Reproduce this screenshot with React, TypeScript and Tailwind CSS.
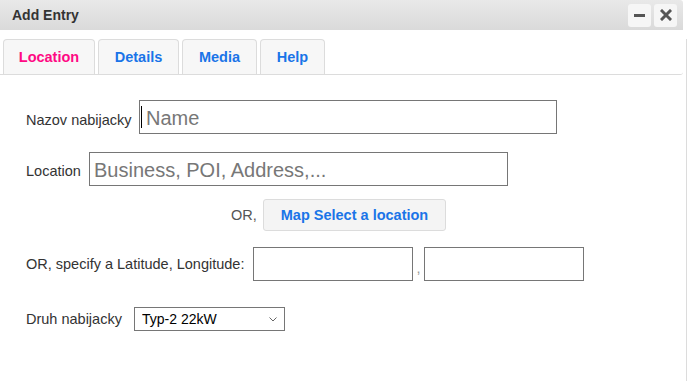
import React from "react";

const font = { fontFamily: '"Liberation Sans", Arial, sans-serif' };

function Tab({ label, active, width }: { label: string; active?: boolean; width: string }) {
  return (
    <div
      className={`${width} h-[35px] flex items-center justify-center pt-[2px] rounded-t-[4px] border border-b-0 border-[#dcdcdc] bg-[#f7f7f7] text-[14.5px] font-bold ${
        active ? "text-[#ff0a84]" : "text-[#1a74e8]"
      }`}
    >
      {label}
    </div>
  );
}

export default function App() {
  return (
    <div className="w-[687px] h-[381px] bg-white overflow-hidden" style={font}>
      {/* title bar */}
      <div className="w-[683px] h-[30px] flex items-center justify-between pl-3 pr-[6px] rounded-tr-[3px] bg-gradient-to-b from-[#e9e9e9] to-[#dadada]">
        <span className="text-[14px] font-bold text-[#333]">Add Entry</span>
        <div className="flex gap-[3px]">
          <button className="w-[23px] h-[23px] rounded-[3px] bg-[#f6f6f6] flex items-center justify-center">
            <span className="block w-[11px] h-[3px] bg-[#555]" />
          </button>
          <button className="w-[23px] h-[23px] rounded-[3px] bg-[#f6f6f6] flex items-center justify-center">
            <svg width="12" height="12" viewBox="0 0 12 12">
              <path d="M2 2 L10 10 M10 2 L2 10" stroke="#555" strokeWidth="3" strokeLinecap="square" />
            </svg>
          </button>
        </div>
      </div>

      <div className="w-[687px] h-[351px] border-r border-[#dcdcdc]">
        {/* tabs */}
        <div className="w-[683px] mt-[9px] pl-[3px] flex gap-[3px] border-b border-[#dcdcdc] rounded-br-[3px]">
          <Tab label="Location" active width="w-[92px]" />
          <Tab label="Details" width="w-[81px]" />
          <Tab label="Media" width="w-[75px]" />
          <Tab label="Help" width="w-[65px]" />
        </div>

        {/* form */}
        <div className="pl-[26px] pt-[25px] text-[14.5px] text-[#333]">
          <div className="flex items-center h-[34px]">
            <span className="w-[113px] pt-[7px]">Nazov nabijacky</span>
            <div className="relative">
              <input
                className="w-[418px] h-[34px] border border-[#767676] pl-[6px] pt-[2px] text-[20px] text-[#333] placeholder:text-[#777] outline-none"
                placeholder="Name"
              />
              <span className="absolute left-[2px] top-[6px] w-px h-[22px] bg-black" />
            </div>
          </div>

          <div className="flex items-center h-[34px] mt-[18px]">
            <span className="w-[63px] pt-[5px]">Location</span>
            <input
              className="w-[419px] h-[34px] border border-[#767676] pl-[4px] pt-[2px] text-[20px] text-[#333] placeholder:text-[#777] outline-none"
              placeholder="Business, POI, Address,..."
            />
          </div>

          <div className="flex items-center h-[32px] mt-[13px] pl-[205px]">
            <span className="w-[32px] pt-[2px] text-[#555]">OR,</span>
            <button className="w-[183px] h-[32px] pt-[1px] rounded-[3px] border border-[#dcdcdc] bg-[#f4f4f4] text-[14.5px] font-bold text-[#1a74e8]">
              Map Select a location
            </button>
          </div>

          <div className="flex items-center h-[34px] mt-[16px]">
            <span className="w-[227px] pt-[2px]">OR, specify a Latitude, Longitude:</span>
            <input className="w-[160px] h-[34px] border border-[#767676] outline-none" />
            <span className="w-[11px] text-center text-[#999] pt-[10px]">,</span>
            <input className="w-[160px] h-[34px] border border-[#767676] outline-none" />
          </div>

          <div className="flex items-center h-[24px] mt-[26px]">
            <span className="w-[108px] pt-[2px]">Druh nabijacky</span>
            <div className="relative w-[151px] h-[24px]">
              <select className="appearance-none w-[151px] h-[24px] border border-[#767676] pl-[7px] pt-[1px] text-[14px] text-black bg-white outline-none">
                <option>Typ-2 22kW</option>
              </select>
              <svg className="absolute right-[8px] top-[10px] pointer-events-none" width="8" height="5" viewBox="0 0 8 5">
                <path d="M0.5 0.5 L4 4 L7.5 0.5" fill="none" stroke="#666" strokeWidth="1" />
              </svg>
            </div>
          </div>
        </div>
      </div>
    </div>
  );
}
